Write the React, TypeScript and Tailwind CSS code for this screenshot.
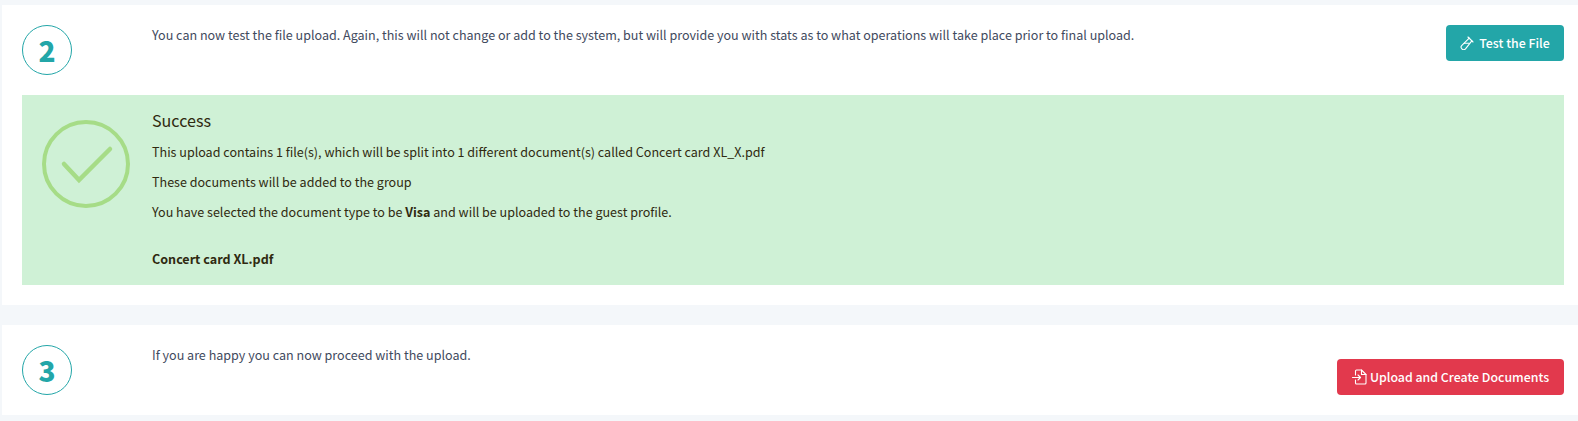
import React from 'react';

const StepCircle = ({ n }: { n: number }) => (
  <div className="flex h-[50px] w-[50px] shrink-0 items-center justify-center rounded-full border border-[#23a6a8] text-[28px] font-black leading-none text-[#23a6a8]">
    {n}
  </div>
);

const TubeIcon = () => (
  <svg width="14" height="14" viewBox="0 0 14 14" fill="none" stroke="currentColor" strokeWidth="1.1" strokeLinecap="round" strokeLinejoin="round">
    <path d="M8 1 L13 6" />
    <path d="M9.2 2.2 L1.9 9.3 a2.5 2.5 0 0 0 3.6 3.6 L11.8 4.8" />
    <path d="M4.2 7.3 H9.2" />
  </svg>
);

const FileArrowIcon = () => (
  <svg width="15" height="16" viewBox="0 0 15 16" fill="none" stroke="currentColor" strokeWidth="1.1" strokeLinecap="round" strokeLinejoin="round">
    <path d="M3.5 6 V2 a1 1 0 0 1 1-1 H9.5 L14 5.5 V14 a1 1 0 0 1-1 1 H4.5 a1 1 0 0 1-1-1 V11" />
    <path d="M9.5 1 V5.5 H14" />
    <path d="M0.5 8.5 H8.5 M6 6 L8.5 8.5 L6 11" />
  </svg>
);

export default function App() {
  return (
    <div
      className="h-[421px] overflow-hidden bg-[#f4f7fa] pt-[5px] pl-[2px] text-[12.55px] text-[#3f4a5e]"
      style={{ fontFamily: '"Noto Sans CJK SC", "Noto Sans", sans-serif' }}
    >
      <section className="h-[300px] bg-white pt-5 pr-3.5 pl-5">
        <div className="flex h-[70px] items-start">
          <div className="w-[130px]">
            <StepCircle n={2} />
          </div>
          <p className="flex-1 leading-[19px]">
            You can now test the file upload. Again, this will not change or add to the system, but
            will provide you with stats as to what operations will take place prior to final upload.
          </p>
          <button className="flex h-9 w-[118px] items-center justify-center gap-[5px] rounded bg-[#23a6a8] text-[12.35px] font-medium text-white">
            <TubeIcon />
            Test the File
          </button>
        </div>

        <div className="flex h-[190px] bg-[#cff1d6] text-[#2f2a10]">
          <div className="w-[130px] shrink-0 pt-[25px] pl-5">
            <svg width="88" height="88" viewBox="0 0 88 88" fill="none" stroke="#a6dc87" strokeWidth="4" strokeLinecap="round">
              <circle cx="44" cy="44" r="42" />
              <path d="M22 44 L37 60 L68 29" strokeWidth="4.5" />
            </svg>
          </div>
          <div className="pt-[13px]">
            <h4 className="text-[16.1px] leading-[24px]">Success</h4>
            <p className="mt-[10px] leading-[20px]">
              This upload contains 1 file(s), which will be split into 1 different document(s) called Concert card XL_X.pdf
            </p>
            <p className="mt-[10px] leading-[20px]">These documents will be added to the group</p>
            <p className="mt-[10px] leading-[20px]">
              You have selected the document type to be <b>Visa</b> and will be uploaded to the guest profile.
            </p>
            <p className="mt-[27px] leading-[20px] font-bold">Concert card XL.pdf</p>
          </div>
        </div>
      </section>

      <section className="mt-5 flex h-[90px] items-start bg-white pt-5 pr-3.5 pl-5">
        <div className="w-[130px]">
          <StepCircle n={3} />
        </div>
        <p className="flex-1 leading-[19px]">If you are happy you can now proceed with the upload.</p>
        <button className="mt-[14px] flex h-9 w-[227px] items-center justify-center gap-[3px] rounded bg-[#e2394d] text-[12.35px] font-medium text-white">
          <FileArrowIcon />
          Upload and Create Documents
        </button>
      </section>
    </div>
  );
}
